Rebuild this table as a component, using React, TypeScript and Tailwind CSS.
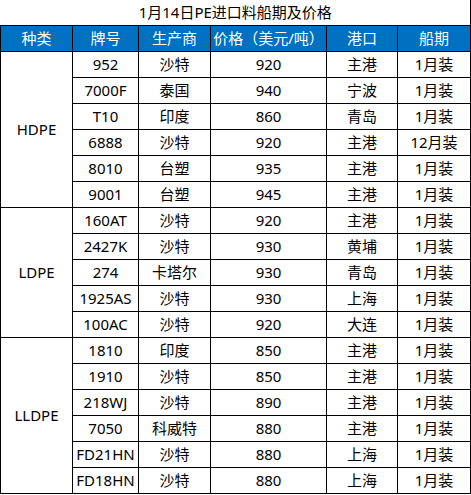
import React from 'react';

type Row = { grade: string; maker: string; price: number; port: string; ship: string };

const groups: { kind: string; rows: Row[] }[] = [
  {
    kind: 'HDPE',
    rows: [
      { grade: '952', maker: '沙特', price: 920, port: '主港', ship: '1月装' },
      { grade: '7000F', maker: '泰国', price: 940, port: '宁波', ship: '1月装' },
      { grade: 'T10', maker: '印度', price: 860, port: '青岛', ship: '1月装' },
      { grade: '6888', maker: '沙特', price: 920, port: '主港', ship: '12月装' },
      { grade: '8010', maker: '台塑', price: 935, port: '主港', ship: '1月装' },
      { grade: '9001', maker: '台塑', price: 945, port: '主港', ship: '1月装' },
    ],
  },
  {
    kind: 'LDPE',
    rows: [
      { grade: '160AT', maker: '沙特', price: 920, port: '主港', ship: '1月装' },
      { grade: '2427K', maker: '沙特', price: 930, port: '黄埔', ship: '1月装' },
      { grade: '274', maker: '卡塔尔', price: 930, port: '青岛', ship: '1月装' },
      { grade: '1925AS', maker: '沙特', price: 930, port: '上海', ship: '1月装' },
      { grade: '100AC', maker: '沙特', price: 920, port: '大连', ship: '1月装' },
    ],
  },
  {
    kind: 'LLDPE',
    rows: [
      { grade: '1810', maker: '印度', price: 850, port: '主港', ship: '1月装' },
      { grade: '1910', maker: '沙特', price: 850, port: '主港', ship: '1月装' },
      { grade: '218WJ', maker: '沙特', price: 890, port: '主港', ship: '1月装' },
      { grade: '7050', maker: '科威特', price: 880, port: '主港', ship: '1月装' },
      { grade: 'FD21HN', maker: '沙特', price: 880, port: '上海', ship: '1月装' },
      { grade: 'FD18HN', maker: '沙特', price: 880, port: '上海', ship: '1月装' },
    ],
  },
];

const headers = ['种类', '牌号', '生产商', '价格（美元/吨）', '港口', '船期'];

const cell = 'border border-black p-0 text-center align-middle whitespace-nowrap';

const App: React.FC = () => {
  return (
    <div className="min-h-screen bg-white font-['Noto_Sans','Noto_Sans_CJK_SC',sans-serif] text-[15px] leading-none text-black">
      <table className="w-[470px] table-fixed border-collapse">
        <colgroup>
          <col className="w-[72px]" />
          <col className="w-[66px]" />
          <col className="w-[72px]" />
          <col className="w-[116px]" />
          <col className="w-[71px]" />
          <col className="w-[73px]" />
        </colgroup>
        <thead>
          {/* Title row */}
          <tr className="h-[25px]">
            <th colSpan={6} className="border-b border-r border-black p-0 text-center align-middle font-normal">
              1月14日PE进口料船期及价格
            </th>
          </tr>
          <tr className="h-[26px] bg-[#0070c0] text-white">
            {headers.map((h) => (
              <th key={h} className={`${cell} font-normal`}>
                {h}
              </th>
            ))}
          </tr>
        </thead>
        <tbody>
          {groups.map((g) =>
            g.rows.map((r, i) => (
              <tr key={g.kind + r.grade} className="h-[26px]">
                {i === 0 && (
                  <td rowSpan={g.rows.length} className={cell}>
                    {g.kind}
                  </td>
                )}
                <td className={cell}>{r.grade}</td>
                <td className={cell}>{r.maker}</td>
                <td className={cell}>{r.price}</td>
                <td className={cell}>{r.port}</td>
                <td className={cell}>{r.ship}</td>
              </tr>
            ))
          )}
        </tbody>
      </table>
    </div>
  );
};

export default App;
